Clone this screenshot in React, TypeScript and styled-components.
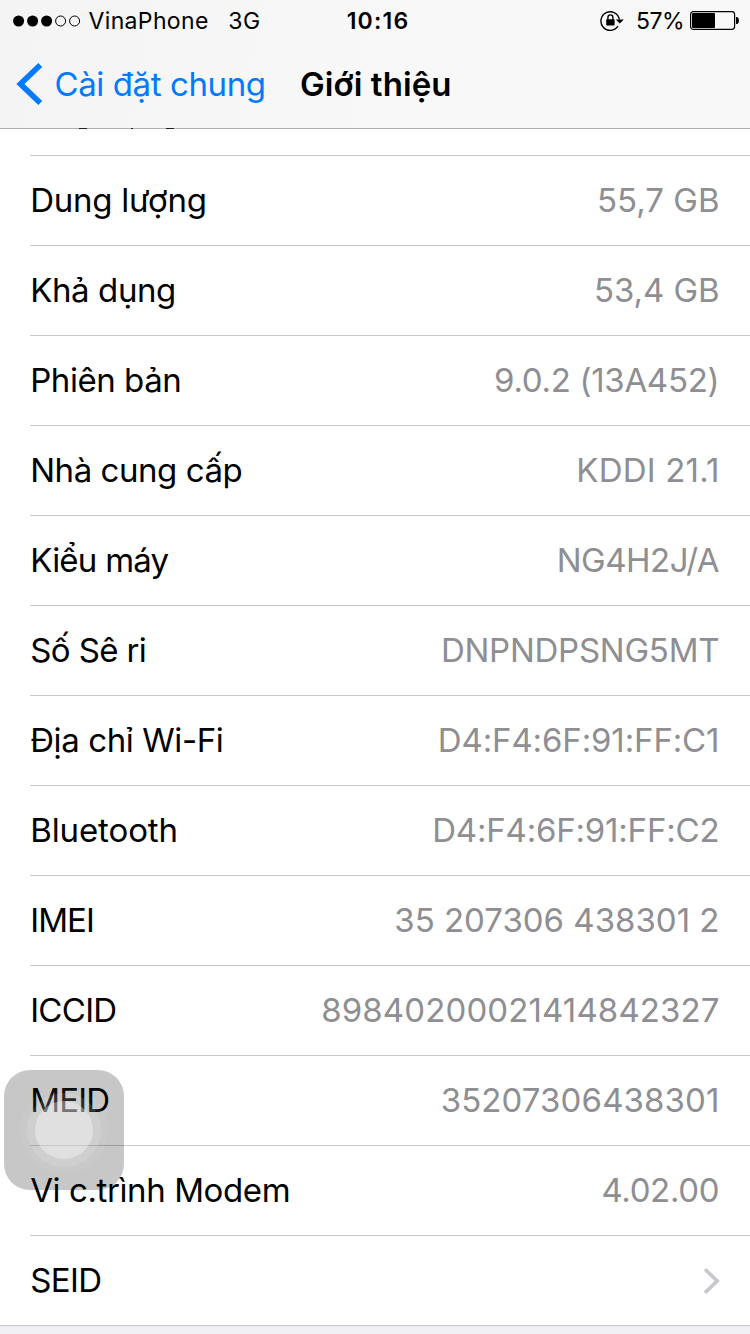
import React from 'react';
import styled, { createGlobalStyle } from 'styled-components';

const GlobalStyle = createGlobalStyle`
  * { box-sizing: border-box; }
  body {
    margin: 0;
    background: #efeff4;
    color: #000;
    font-family: Inter, "Liberation Sans", sans-serif;
    font-feature-settings: "calt" 0;
  }
`;

const Screen = styled.main`
  position: relative;
  width: 750px;
  height: 1334px;
  overflow: hidden;
  background: #efeff4;
`;

const Header = styled.header`
  height: 128px;
  background: linear-gradient(100deg, #f4f4f4, #f8f8f8 50%);
`;

const StatusBar = styled.div`
  display: grid;
  grid-template-columns: 1fr auto 1fr;
  align-items: center;
  height: 41px;
  padding: 0 11px 0 13px;
  font-size: 23px;
  line-height: 39px;
`;

const StatusGroup = styled.div<{ $end?: boolean }>`
  display: flex;
  align-items: center;
  justify-content: ${(p) => (p.$end ? 'flex-end' : 'flex-start')};
`;

const StatusText = styled.span<{ $track?: number; $gap?: number }>`
  padding-top: 2px;
  letter-spacing: ${(p) => p.$track ?? 0}px;
  margin-left: ${(p) => p.$gap ?? 0}px;
  white-space: nowrap;
`;

const Percent = styled(StatusText)`
  margin-right: 6px;
`;

const Clock = styled.time`
  padding: 2px 0 0 3px;
  font-weight: 600;
  letter-spacing: 1.2px;
  margin-right: -1px;
`;

const NavBar = styled.nav`
  display: flex;
  align-items: center;
  height: 87px;
  padding-left: 16px;
  line-height: 87px;
  white-space: nowrap;
`;

const BackLink = styled.a`
  display: flex;
  align-items: center;
  width: 284px;
  color: #007aff;
  font-size: 33px;
  font-weight: 370;
  letter-spacing: -0.4px;

  svg { margin: 0 11.5px 2px 0; }
`;

const Title = styled.h1`
  margin: 0;
  font-size: 33px;
  font-weight: 600;
  letter-spacing: 0.1px;
`;

/* Bottom edge of the header, where the descenders of the scrolled-off row still show. */
const HeaderEdge = styled.div`
  display: flex;
  height: 1px;
  padding-left: 79px;
  background: #b2b2b2;
`;

const Descender = styled.i<{ $width: number; $gap: number }>`
  width: ${(p) => p.$width}px;
  margin-left: ${(p) => p.$gap}px;
  background: #222;
`;

const List = styled.ul`
  list-style: none;
  margin: 0;
  padding: 26px 0 0 30px;
  background: #fff;
  border-bottom: 1px solid #c8c7cc;
`;

const Row = styled.li`
  display: flex;
  align-items: center;
  justify-content: space-between;
  height: 90px;
  padding: 0 30.5px 0 0.2px;
  border-top: 1px solid #c8c7cc;
  font-size: 33px;
  font-weight: 370;
  line-height: 89px;
  white-space: nowrap;
`;

const Label = styled.span<{ $track: number }>`
  letter-spacing: ${(p) => p.$track}px;
`;

const Value = styled.span<{ $track: number }>`
  color: #8e8e93;
  letter-spacing: ${(p) => p.$track}px;
  margin-right: ${(p) => -p.$track}px;
`;

const AssistiveButton = styled.div`
  position: absolute;
  left: 4px;
  top: 1070px;
  width: 120px;
  height: 120px;
  border-radius: 26px;
  background: rgba(0, 0, 0, 0.22);
  display: grid;
  place-items: center;
`;

const Ring = styled.div<{ $size: number; $alpha: number }>`
  display: grid;
  place-items: center;
  width: ${(p) => p.$size}px;
  height: ${(p) => p.$size}px;
  border-radius: 50%;
  background: rgba(255, 255, 255, ${(p) => p.$alpha});
`;

type Item = { label: string; value?: string; lt: number; vt?: number };

const items: Item[] = [
  { label: 'Dung lượng', value: '55,7 GB', lt: -0.25, vt: 0 },
  { label: 'Khả dụng', value: '53,4 GB', lt: -0.4, vt: -0.1 },
  { label: 'Phiên bản', value: '9.0.2 (13A452)', lt: -0.45, vt: -0.3 },
  { label: 'Nhà cung cấp', value: 'KDDI 21.1', lt: -0.45, vt: 0.2 },
  { label: 'Kiểu máy', value: 'NG4H2J/A', lt: -0.75, vt: -0.5 },
  { label: 'Số Sê ri', value: 'DNPNDPSNG5MT', lt: -0.6, vt: -0.25 },
  { label: 'Địa chỉ Wi-Fi', value: 'D4:F4:6F:91:FF:C1', lt: -0.4, vt: -0.13 },
  { label: 'Bluetooth', value: 'D4:F4:6F:91:FF:C2', lt: -0.1, vt: -0.2 },
  { label: 'IMEI', value: '35 207306 438301 2', lt: -0.9, vt: 0 },
  { label: 'ICCID', value: '89840200021414842327', lt: -0.7, vt: 0.12 },
  { label: 'MEID', value: '35207306438301', lt: -0.8, vt: 0.12 },
  { label: 'Vi c.trình Modem', value: '4.02.00', lt: -0.4, vt: -0.35 },
  { label: 'SEID', lt: -0.6 },
];

const SignalDots = () => (
  <svg width="68" height="12" viewBox="0 0 68 12">
    {[0, 1, 2].map((i) => (
      <circle key={i} cx={5.6 + i * 14} cy="6" r="5.5" />
    ))}
    {[3, 4].map((i) => (
      <circle key={i} cx={5.6 + i * 14} cy="6" r="5" fill="none" stroke="#000" />
    ))}
  </svg>
);

const RotationLock = () => (
  <svg width="24" height="22" viewBox="0 0 24 22">
    <path d="M18 16.2A9.3 9.3 0 1 1 19.4 9.5" fill="none" stroke="#000" strokeWidth="1.4" />
    <path d="M15.8 9.4h8l-4 4z" />
    <rect x="6.2" y="9.2" width="8.4" height="6.2" rx="0.6" />
    <path d="M7.9 9.8V7.4a2.5 2.5 0 0 1 5 0v2.4" fill="none" stroke="#000" strokeWidth="1.4" />
  </svg>
);

const Battery = () => (
  <svg width="49" height="19" viewBox="0 0 49 19">
    <rect x="0.6" y="0.6" width="44" height="17.8" rx="2.8" fill="none" stroke="#000" strokeWidth="1.2" />
    <rect x="2" y="2" width="23" height="15" rx="1" />
    <path d="M46 6h1.2q1.8 0.8 1.8 3.5t-1.8 3.5H46z" />
  </svg>
);

export default function App() {
  return (
    <Screen>
      <GlobalStyle />
      <Header>
        <StatusBar>
          <StatusGroup>
            <SignalDots />
            <StatusText $gap={7.5} $track={0.35}>VinaPhone</StatusText>
            <StatusText $gap={19.5} $track={0.5}>3G</StatusText>
          </StatusGroup>
          <Clock>10:16</Clock>
          <StatusGroup $end>
            <RotationLock />
            <Percent $gap={12} $track={-0.5}>57%</Percent>
            <Battery />
          </StatusGroup>
        </StatusBar>
        <NavBar>
          <BackLink>
            <svg width="27" height="42" viewBox="0 0 27 42">
              <path d="M24.3 2 4.4 21l19.9 19" fill="none" stroke="#007aff" strokeWidth="5.6" />
            </svg>
            Cài đặt chung
          </BackLink>
          <Title>Giới thiệu</Title>
        </NavBar>
      </Header>
      <HeaderEdge>
        <Descender $gap={0} $width={8} />
        <Descender $gap={44} $width={2} />
        <Descender $gap={33} $width={8} />
      </HeaderEdge>
      <List>
        {items.map((item) => (
          <Row key={item.label}>
            <Label $track={item.lt}>{item.label}</Label>
            {item.value ? (
              <Value $track={item.vt ?? 0}>{item.value}</Value>
            ) : (
              <svg width="18" height="28" viewBox="0 0 18 28">
                <path d="M3 2.3 15.2 14 3 25.7" fill="none" stroke="#c7c7cc" strokeWidth="3.6" />
              </svg>
            )}
          </Row>
        ))}
      </List>
      <AssistiveButton>
        <Ring $size={88} $alpha={0.05}>
          <Ring $size={74} $alpha={0.12}>
            <Ring $size={58} $alpha={0.35} />
          </Ring>
        </Ring>
      </AssistiveButton>
    </Screen>
  );
}
